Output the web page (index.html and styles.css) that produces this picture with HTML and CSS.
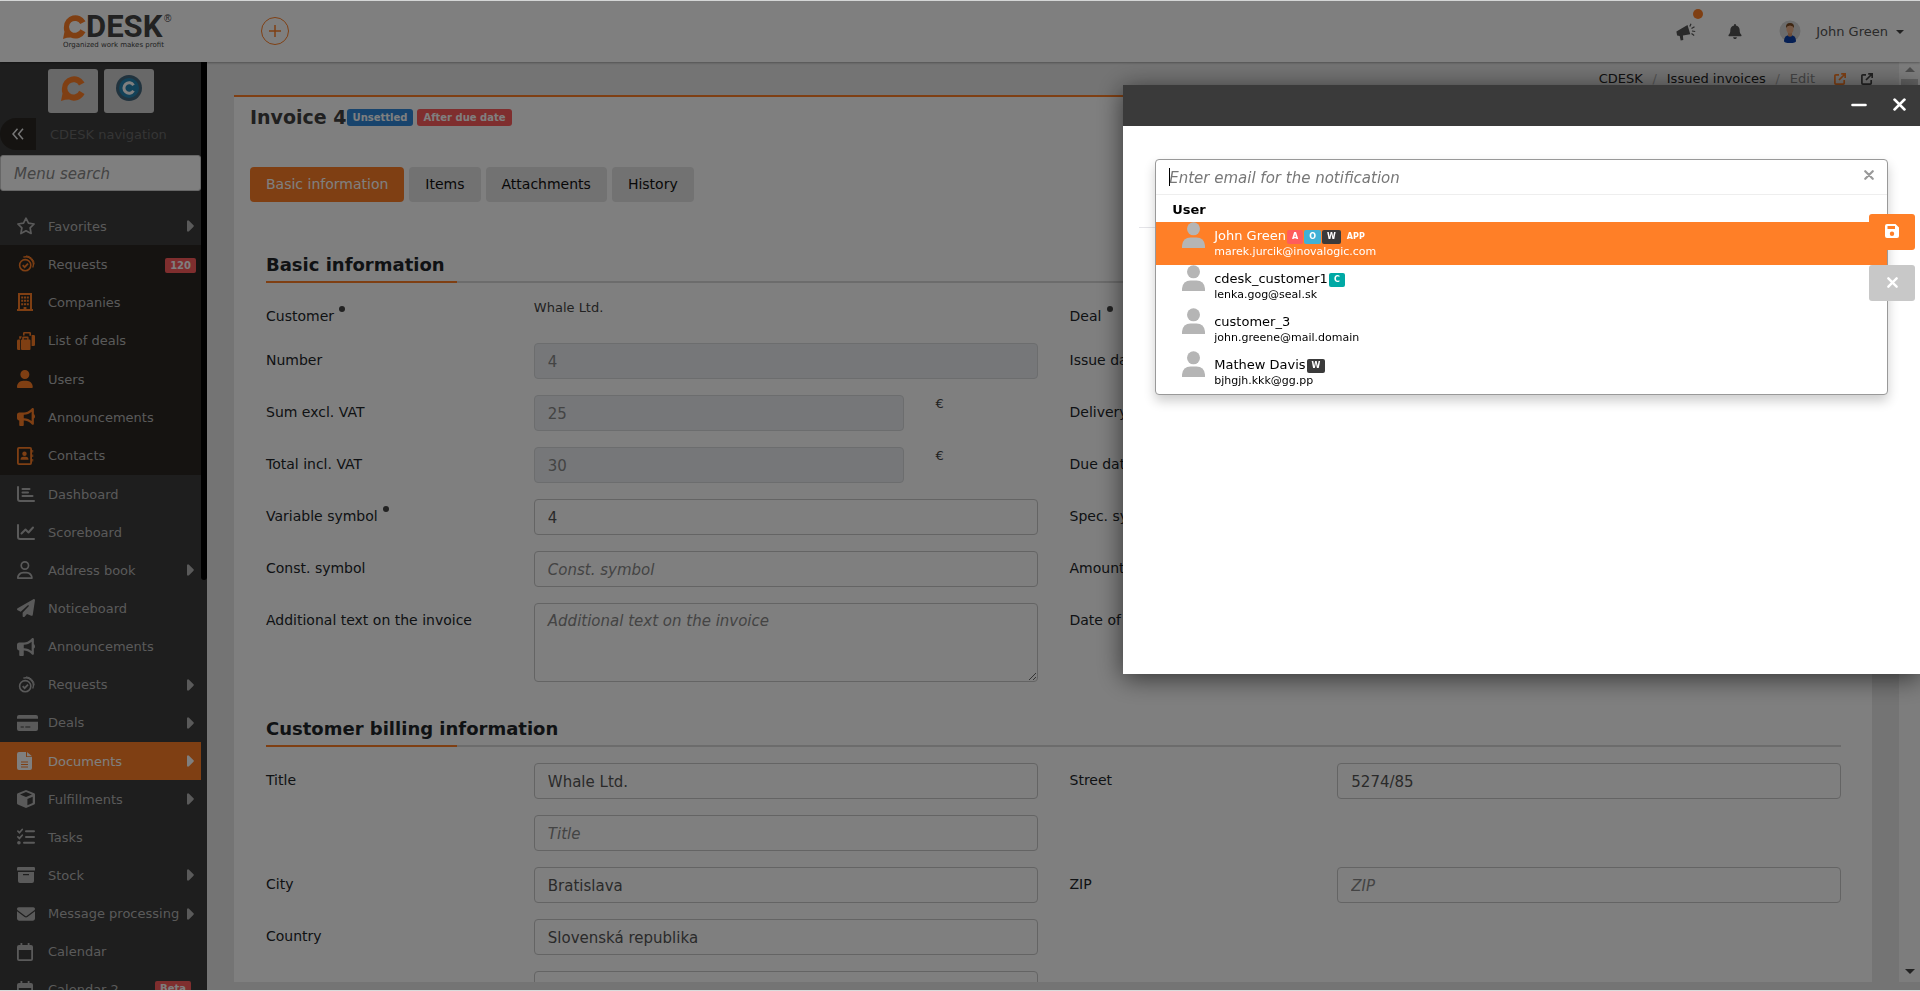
FILE: index.html
```html
<!DOCTYPE html>
<html lang="en">
<head>
<meta charset="utf-8">
<title>CDESK – Invoice 4</title>
<link rel="stylesheet" href="styles.css">
</head>
<body>
<svg class="sprite" aria-hidden="true">
  <symbol id="i-star" viewBox="0 0 18 18"><path d="M9 1.200l2.500 5 5.600.8-4 3.900 1 5.600L9 13.800l-5.100 2.700 1-5.600-4-3.900 5.600-.8z" fill="none" stroke="currentColor" stroke-width="1.700" stroke-linejoin="round"/></symbol>
  <symbol id="i-request" viewBox="0 0 18 18"><g fill="none" stroke="currentColor"><circle cx="8.200" cy="10.200" r="5.600" stroke-width="1.600"/><path d="M5.700 10.200l1.900 1.900 3.400-3.500" stroke-width="1.800"/><path d="M6.300 2.200a7.600 7.600 0 0 1 9.400 10.200" stroke-width="1.300"/><path d="M9 .9a8.300 8.300 0 0 1 8.200 8.400" stroke-width="1"/></g></symbol>
  <symbol id="i-building" viewBox="0 0 18 18"><path d="M1 0h14v16h1v2H0v-2h1zm2 2v14h3.600v-2h2.800v2H13V2z" fill-rule="evenodd" fill="currentColor"/><path d="M4.200 3.400h2v2h-2zm2.800 0h2v2H7zm2.800 0h2v2h-2zM4.200 6.800h2v2h-2zm2.800 0h2v2H7zm2.800 0h2v2h-2zM4.200 10.200h2v2h-2zm2.800 0h2v2H7zm2.800 0h2v2h-2z" fill="currentColor"/></symbol>
  <symbol id="i-bags" viewBox="0 0 18 18"><path d="M6 3.500V1.200Q6 0 7.200 0h5.600Q14 0 14 1.200v2.600h-1.600V1.600H7.600v1.900zM1.600 7.600h1.600V18H1.400Q0 18 0 16.500V9q0-1.400 1.600-1.400zM2.200 4.200h2.600L3.900 6.800H2.200zM14.600 3H16.800Q18 3 18 4.200v8.600q0 1.200-1.200 1.200h-2.200zM5.200 5.600Q5.400 4.600 6.400 4.600h4.200q1 0 1 1v2h.9q1 0 1 1V17q0 1-1 1H5q-1 0-1-1V8.600q0-1 1-1h.2zm1.600.6v1.200h3.400V6.200z" fill="currentColor" fill-rule="evenodd"/></symbol>
  <symbol id="i-user" viewBox="0 0 512 512"><path fill="currentColor" d="M224 256A128 128 0 1 0 224 0a128 128 0 1 0 0 256zm-45.700 48C79.800 304 0 383.800 0 482.300C0 498.700 13.300 512 29.700 512H418.300c16.400 0 29.700-13.300 29.700-29.700C448 383.800 368.200 304 269.700 304H178.300z"/></symbol>
  <symbol id="i-user-o" viewBox="0 0 512 512"><path fill="currentColor" d="M304 128a80 80 0 1 0 -160 0 80 80 0 1 0 160 0zM96 128a128 128 0 1 1 256 0A128 128 0 1 1 96 128zM49.300 464H398.700c-8.900-63.300-63.300-112-129-112H178.300c-65.700 0-120.100 48.700-129 112zM0 482.300C0 383.800 79.800 304 178.300 304h91.400C368.200 304 448 383.800 448 482.300c0 16.400-13.300 29.700-29.700 29.700H29.700C13.300 512 0 498.700 0 482.300z"/></symbol>
  <symbol id="i-horn" viewBox="0 0 512 512"><path fill="currentColor" d="M480 32c0-12.900-7.800-24.600-19.800-29.600s-25.700-2.200-34.900 6.900L381.700 53c-48 48-113.100 75-181 75H192 160 64c-35.300 0-64 28.700-64 64v96c0 35.300 28.700 64 64 64l0 128c0 17.700 14.300 32 32 32h64c17.700 0 32-14.300 32-32V352l8.700 0c67.900 0 133 27 181 75l43.600 43.600c9.200 9.200 22.900 11.900 34.900 6.900s19.800-16.600 19.800-29.600V300.400c18.600-8.800 32-32.500 32-60.400s-13.400-51.600-32-60.400V32zm-64 76.700V240 371.300C357.200 317.800 280.500 288 200.700 288H192V192h8.700c79.800 0 156.500-29.800 215.300-83.300z"/></symbol>
  <symbol id="i-contact" viewBox="0 0 18 18"><path d="M2 0h11q2 0 2 2v14q0 2-2 2H2q-2 0-2-2V2q0-2 2-2zm-.2 1.800v14.400h11.400V1.800z" fill="currentColor" fill-rule="evenodd"/><circle cx="7.500" cy="6.800" r="2.200" fill="currentColor"/><path d="M3.500 12.800q0-3 2.800-3h2.400q2.800 0 2.800 3z" fill="currentColor"/><path d="M15.300 3h.9v2.500h-.9zm0 4.500h.9V10h-.9zm0 4.500h.9v2.500h-.9z" fill="currentColor"/></symbol>
  <symbol id="i-bars" viewBox="0 0 18 18"><g fill="none" stroke="currentColor" stroke-width="2" stroke-linecap="round"><path d="M1 2v12q0 2 2 2h14M5.500 4h7M5.500 7.500h5.500M5.500 11h10"/></g></symbol>
  <symbol id="i-line" viewBox="0 0 18 18"><g fill="none" stroke="currentColor" stroke-width="2" stroke-linecap="round" stroke-linejoin="round"><path d="M1 2v12q0 2 2 2h14M4.500 10.500L8.500 6.500l3 3L16 4.500"/></g></symbol>
  <symbol id="i-plane" viewBox="0 0 512 512"><path fill="currentColor" d="M498.100 5.600c10.100 7 15.400 19.100 13.500 31.200l-64 416c-1.500 9.700-7.400 18.200-16 23s-18.900 5.400-28 1.600L284 427.700l-68.500 74.100c-8.900 9.700-22.900 12.900-35.200 8.100S160 493.200 160 480V396.400c0-4 1.500-7.800 4.200-10.700L331.800 202.800c5.800-6.300 5.600-16-.4-22s-15.700-6.400-22-.7L106 360.800 17.700 316.600C7.100 311.300 .3 300.700 0 288.900s5.900-22.800 16.100-28.700l448-256c10.700-6.100 23.900-5.500 34 1.400z"/></symbol>
  <symbol id="i-card" viewBox="0 0 21 18"><path d="M2 1h17q2 0 2 2v1.800H0V3q0-2 2-2zM0 7.800h21V15q0 2-2 2H2q-2 0-2-2zm3.600 4.700v1.100h3.200v-1.100zm4.700 0v1.100h5v-1.100z" fill="currentColor" fill-rule="evenodd"/></symbol>
  <symbol id="i-doc" viewBox="0 0 18 18"><path d="M2 0h7v5h6v11q0 2-2 2H2q-2 0-2-2V2q0-2 2-2zm8 0l5 4.300h-5zM4 9.400v1h7v-1zm0 2.500v1h7v-1zm0 2.500v1h7v-1z" fill="currentColor" fill-rule="evenodd"/></symbol>
  <symbol id="i-cube" viewBox="0 0 18 18"><path d="M9 0l8.200 3.200q.8.400.8 1.300v8.800q0 .9-.8 1.300L9 18 .8 14.600Q0 14.200 0 13.300V4.500q0-.9.800-1.300zm0 2L3 4.400l6 2.500 6-2.500zm1.400 6.900v6.400l5.300-2.200V6.700z" fill="currentColor" fill-rule="evenodd"/></symbol>
  <symbol id="i-tasks" viewBox="0 0 18 18"><g fill="none" stroke="currentColor" stroke-linecap="round"><path d="M9 3.300h8M9 9h8M7 14.700h10" stroke-width="2"/><path d="M.9 3.200l1.500 1.500 2.800-3.200M.9 8.900l1.500 1.500 2.800-3.200" stroke-width="1.700"/></g><circle cx="1.900" cy="14.700" r="1.800" fill="currentColor"/></symbol>
  <symbol id="i-box" viewBox="0 0 18 18"><path d="M1.200 1h15.600Q18 1 18 2.200v2.300H0V2.200Q0 1 1.200 1zM1 6h16v9q0 2-2 2H3q-2 0-2-2zm5 2v1.200h6V8z" fill="currentColor" fill-rule="evenodd"/></symbol>
  <symbol id="i-mail" viewBox="0 0 512 512"><path fill="currentColor" d="M48 64C21.500 64 0 85.500 0 112c0 15.100 7.100 29.300 19.200 38.400L236.800 313.600c11.400 8.500 27 8.500 38.400 0L492.800 150.400c12.100-9.100 19.200-23.300 19.200-38.400c0-26.500-21.500-48-48-48H48zM0 176V384c0 35.300 28.700 64 64 64H448c35.300 0 64-28.700 64-64V176L294.400 339.200c-22.800 17.100-54 17.100-76.800 0L0 176z"/></symbol>
  <symbol id="i-cal" viewBox="0 0 18 18"><path d="M3.500 0h1.800v2h5.400V0h1.800v2H14q2 0 2 2v12q0 2-2 2H2q-2 0-2-2V4q0-2 2-2h1.500zM1.800 7v9.200h12.400V7z" fill="currentColor" fill-rule="evenodd"/></symbol>
  <symbol id="i-arrow" viewBox="0 0 7 12"><path d="M0 1.200Q.6-.3 2 .7L6.500 5.300q.7.700 0 1.400L2 11.300Q.6 12.300 0 10.800z" fill="currentColor"/></symbol>
  <symbol id="i-x" viewBox="0 0 12 12"><path d="M1.500 1.500l9 9m0-9l-9 9" fill="none" stroke="currentColor" stroke-width="2.600" stroke-linecap="round"/></symbol>
  <symbol id="i-ext" viewBox="0 0 12 12"><path d="M5 1.800H1.800Q.9 1.800.9 2.700v7.500q0 .9.900.9h7.500q.9 0 .9-.9V7M7.200.9h4v4M11 1L5 7" fill="none" stroke="currentColor" stroke-width="1.700"/></symbol>
  <symbol id="i-person" viewBox="0 0 23 26"><circle cx="11.500" cy="6.800" r="6.500" fill="currentColor"/><path d="M0 26v-2.500Q1 15.600 8.500 15.600h6Q22 15.600 23 23.500V26z" fill="currentColor"/></symbol>
  <symbol id="i-c" viewBox="0 0 24 26"><path d="M0 26L1.500 18.500A12 12 0 0 1 1 13A12 12 0 0 1 23.500 7.500L18 10.500A6.200 6.200 0 1 0 18.200 15.800L23.500 19A12 12 0 0 1 8 24.600Q4 24.600 0 26z" fill="#ff7f27"/></symbol>
</svg>

<div class="app">
  <header class="topbar">
    <a class="logo" href="#" aria-label="CDESK">
      <svg width="112" height="42" viewBox="0 0 112 42">
        <use href="#i-c" x="0" y="4" width="23" height="25"/>
        <text class="logo-name" x="23" y="27">DESK</text>
        <text class="logo-reg" x="101" y="12">®</text>
        <text class="logo-tag" x="0" y="37">Organized work makes profit</text>
      </svg>
    </a>
    <button class="add" type="button" aria-label="Add"><svg width="12" height="12" viewBox="0 0 12 12"><path d="M6 0v12M0 6h12" stroke="currentColor" stroke-width="1.500"/></svg></button>
    <div class="userbar">
      <button class="plain news" type="button" aria-label="News">
        <svg width="20" height="18" viewBox="0 0 20 18"><path d="M.4 8.400L11.500 2l2.800 9.300-7.400 1.300.4 4.400-2.600.5-1-4.600-2.600-.3z" fill="currentColor"/><path d="M13.800 3.500L15 .7M15.500 5.500l3-1.800M16 8l3.200.5M15.500 10.500l2.700 2" stroke="currentColor" stroke-width="1.200"/></svg>
        <span class="dot"></span>
      </button>
      <button class="plain" type="button" aria-label="Notifications"><svg width="14" height="15" viewBox="0 0 448 512"><path fill="currentColor" d="M224 0c-17.700 0-32 14.300-32 32V51.200C119 66 64 130.600 64 208v18.800c0 47-17.300 92.400-48.500 127.600l-7.400 8.300c-8.400 9.400-10.400 22.900-5.300 34.400S19.400 416 32 416H416c12.600 0 24-7.400 29.200-18.900s3.100-25-5.300-34.400l-7.400-8.300C401.300 319.200 384 273.900 384 226.800V208c0-77.400-55-142-128-156.800V32c0-17.700-14.300-32-32-32zm45.300 493.300c12-12 18.700-28.300 18.700-45.300H160c0 17 6.700 33.300 18.700 45.300s28.300 18.700 45.300 18.700s33.300-6.700 45.300-18.700z"/></svg></button>
      <button class="plain account" type="button">
        <svg width="22" height="24" viewBox="0 0 22 24"><circle cx="11" cy="11" r="10.500" fill="#d8d8d8"/><path d="M5 21q0-6 6-6t6 6q0 2-6 2t-6-2z" fill="#0b3fa8"/><path d="M9 11h4v5q-2 1.500-4 0z" fill="#d99a72"/><ellipse cx="11" cy="9" rx="3.600" ry="4.600" fill="#eab08a"/><path d="M7 8q-.5-5 4-5t4 5q-1-2.500-4-2.500T7 8z" fill="#7a4a22"/></svg>
        <span>John Green</span><span class="caret"></span>
      </button>
    </div>
  </header>

  <div class="body">
    <aside class="side">
      <div class="side-inner">
        <div class="apps">
          <button type="button" aria-label="CDESK"><svg width="24" height="26"><use href="#i-c" width="24" height="26"/></svg></button>
          <button type="button" aria-label="Customer portal"><svg width="26" height="26" viewBox="0 0 26 26"><circle cx="13" cy="13" r="13" fill="#42667c"/><circle cx="13" cy="13" r="10" fill="#2585b2"/><path d="M17.500 10.200A5.200 5.200 0 1 0 17.500 15.800" fill="none" stroke="#fff" stroke-width="3"/></svg></button>
        </div>
        <div class="navhead">
          <button class="collapse" type="button" aria-label="Collapse menu"><svg width="12" height="12" viewBox="0 0 12 12"><path d="M5.500.8L1 6l4.500 5.200M11 .8L6.500 6l4.500 5.200" fill="none" stroke="currentColor" stroke-width="1.500"/></svg></button>
          <span>CDESK navigation</span>
        </div>
        <input class="menusearch" type="text" placeholder="Menu search" aria-label="Menu search">
        <nav class="nav">
          <a class="item" href="#"><svg class="ic"><use href="#i-star"/></svg>Favorites<svg class="arr"><use href="#i-arrow"/></svg></a>
          <div class="favs">
            <a class="item" href="#"><svg class="ic"><use href="#i-request"/></svg>Requests<span class="count">120</span></a>
            <a class="item" href="#"><svg class="ic"><use href="#i-building"/></svg>Companies</a>
            <a class="item" href="#"><svg class="ic"><use href="#i-bags"/></svg>List of deals</a>
            <a class="item" href="#"><svg class="ic"><use href="#i-user"/></svg>Users</a>
            <a class="item" href="#"><svg class="ic"><use href="#i-horn"/></svg>Announcements</a>
            <a class="item" href="#"><svg class="ic"><use href="#i-contact"/></svg>Contacts</a>
          </div>
          <div class="mods">
            <a class="item" href="#"><svg class="ic"><use href="#i-bars"/></svg>Dashboard</a>
            <a class="item" href="#"><svg class="ic"><use href="#i-line"/></svg>Scoreboard</a>
            <a class="item" href="#"><svg class="ic"><use href="#i-user-o"/></svg>Address book<svg class="arr"><use href="#i-arrow"/></svg></a>
            <a class="item" href="#"><svg class="ic"><use href="#i-plane"/></svg>Noticeboard</a>
            <a class="item" href="#"><svg class="ic"><use href="#i-horn"/></svg>Announcements</a>
            <a class="item" href="#"><svg class="ic"><use href="#i-request"/></svg>Requests<svg class="arr"><use href="#i-arrow"/></svg></a>
            <a class="item" href="#"><svg class="ic wide"><use href="#i-card"/></svg>Deals<svg class="arr"><use href="#i-arrow"/></svg></a>
            <a class="item active" href="#"><svg class="ic"><use href="#i-doc"/></svg>Documents<svg class="arr"><use href="#i-arrow"/></svg></a>
            <a class="item" href="#"><svg class="ic"><use href="#i-cube"/></svg>Fulfillments<svg class="arr"><use href="#i-arrow"/></svg></a>
            <a class="item" href="#"><svg class="ic"><use href="#i-tasks"/></svg>Tasks</a>
            <a class="item" href="#"><svg class="ic"><use href="#i-box"/></svg>Stock<svg class="arr"><use href="#i-arrow"/></svg></a>
            <a class="item" href="#"><svg class="ic"><use href="#i-mail"/></svg>Message processing<svg class="arr"><use href="#i-arrow"/></svg></a>
            <a class="item" href="#"><svg class="ic"><use href="#i-cal"/></svg>Calendar</a>
            <a class="item" href="#"><svg class="ic"><use href="#i-cal"/></svg>Calendar 2<span class="count beta">Beta</span></a>
          </div>
        </nav>
      </div>
      <div class="side-scroll"></div>
    </aside>

    <main class="main">
      <div class="page">
        <nav class="crumbs" aria-label="Breadcrumb">
          <a href="#">CDESK</a><i>/</i><a href="#">Issued invoices</a><i>/</i><span>Edit</span>
          <a class="ext hot" href="#" aria-label="Open"><svg width="12" height="12"><use href="#i-ext"/></svg></a>
          <a class="ext" href="#" aria-label="Open in new window"><svg width="12" height="12"><use href="#i-ext"/></svg></a>
        </nav>
        <div class="card">
          <h1>Invoice 4<span class="tag blue">Unsettled</span><span class="tag red">After due date</span></h1>
          <div class="tabs">
            <button class="tab on" type="button">Basic information</button>
            <button class="tab" type="button">Items</button>
            <button class="tab" type="button">Attachments</button>
            <button class="tab" type="button">History</button>
          </div>

          <h2>Basic information</h2>
          <div class="cols">
            <div class="field short"><span class="lab">Customer <b class="req"></b></span><div class="ctl"><span class="val">Whale Ltd.</span></div></div>
            <div class="field short"><span class="lab">Deal <b class="req"></b></span><div class="ctl"></div></div>
            <div class="field"><label class="lab" for="number">Number</label><div class="ctl"><input id="number" type="text" value="4" disabled></div></div>
            <div class="field"><label class="lab" for="issue">Issue date</label><div class="ctl"><input id="issue" type="text"></div></div>
            <div class="field"><label class="lab" for="sum">Sum excl. VAT</label><div class="ctl money"><div><input id="sum" type="text" value="25" disabled></div><span class="val">€</span></div></div>
            <div class="field"><label class="lab" for="delivery">Delivery date</label><div class="ctl"><input id="delivery" type="text"></div></div>
            <div class="field"><label class="lab" for="total">Total incl. VAT</label><div class="ctl money"><div><input id="total" type="text" value="30" disabled></div><span class="val">€</span></div></div>
            <div class="field"><label class="lab" for="due">Due date</label><div class="ctl"><input id="due" type="text"></div></div>
            <div class="field"><label class="lab" for="var">Variable symbol <b class="req"></b></label><div class="ctl"><input id="var" type="text" value="4"></div></div>
            <div class="field"><label class="lab" for="spec">Spec. symbol</label><div class="ctl"><input id="spec" type="text"></div></div>
            <div class="field"><label class="lab" for="const">Const. symbol</label><div class="ctl"><input id="const" type="text" placeholder="Const. symbol"></div></div>
            <div class="field"><label class="lab" for="amount">Amount</label><div class="ctl"><input id="amount" type="text"></div></div>
            <div class="field"><label class="lab" for="add">Additional text on the invoice</label><div class="ctl"><textarea id="add" placeholder="Additional text on the invoice"></textarea></div></div>
            <div class="field"><label class="lab" for="paid">Date of payment</label><div class="ctl"><input id="paid" type="text"></div></div>
          </div>

          <h2 class="next">Customer billing information</h2>
          <div class="cols">
            <div class="field"><label class="lab" for="title">Title</label><div class="ctl"><input id="title" type="text" value="Whale Ltd."></div></div>
            <div class="field"><label class="lab" for="street">Street</label><div class="ctl"><input id="street" type="text" value="5274/85"></div></div>
            <div class="field"><span class="lab"></span><div class="ctl"><input type="text" placeholder="Title" aria-label="Title, second line"></div></div>
            <div class="field"></div>
            <div class="field"><label class="lab" for="city">City</label><div class="ctl"><input id="city" type="text" value="Bratislava"></div></div>
            <div class="field"><label class="lab" for="zip">ZIP</label><div class="ctl"><input id="zip" type="text" placeholder="ZIP"></div></div>
            <div class="field"><label class="lab" for="country">Country</label><div class="ctl"><input id="country" type="text" value="Slovenská republika"></div></div>
            <div class="field"></div>
            <div class="field"><span class="lab"></span><div class="ctl"><input type="text" aria-label="Company ID"></div></div>
          </div>
        </div>
      </div>
      <div class="pagescroll"><span class="up"></span><span class="thumb"></span><span class="down"></span></div>
    </main>
  </div>
</div>

<div class="backdrop"></div>

<section class="modal" role="dialog" aria-label="Notification">
  <div class="modal-head">
    <button class="plain" type="button" aria-label="Minimize"><svg width="16" height="4" viewBox="0 0 16 4"><path d="M1.500 2h13" stroke="currentColor" stroke-width="2.600" stroke-linecap="round"/></svg></button>
    <button class="plain" type="button" aria-label="Close"><svg width="13" height="13"><use href="#i-x"/></svg></button>
  </div>
  <div class="modal-body">
    <hr>
    <div class="picker">
      <div class="picker-search">
        <input type="text" placeholder="Enter email for the notification" aria-label="Email for the notification">
        <span class="cursor"></span>
        <button class="plain" type="button" aria-label="Clear"><svg width="10" height="10"><use href="#i-x"/></svg></button>
      </div>
      <div class="group">User</div>
      <ul class="people">
        <li class="hot"><svg class="person"><use href="#i-person"/></svg><div><div class="name">John Green<span class="chip a">A</span><span class="chip o">O</span><span class="chip w">W</span><span class="chip app-chip">APP</span></div><div class="mail">marek.jurcik@inovalogic.com</div></div></li>
        <li><svg class="person"><use href="#i-person"/></svg><div><div class="name">cdesk_customer1<span class="chip c">C</span></div><div class="mail">lenka.gog@seal.sk</div></div></li>
        <li><svg class="person"><use href="#i-person"/></svg><div><div class="name">customer_3</div><div class="mail">john.greene@mail.domain</div></div></li>
        <li><svg class="person"><use href="#i-person"/></svg><div><div class="name">Mathew Davis<span class="chip w">W</span></div><div class="mail">bjhgjh.kkk@gg.pp</div></div></li>
      </ul>
    </div>
    <div class="actions">
      <button class="save" type="button" aria-label="Save"><svg width="14" height="14" viewBox="0 0 14 14"><path d="M2 0h8.500L14 3.500V12q0 2-2 2H2q-2 0-2-2V2q0-2 2-2zm.5 2v3h7.500V2zM7 7.500a2.200 2.200 0 1 0 0 4.400 2.200 2.200 0 1 0 0-4.400z" fill="#fff" fill-rule="evenodd"/></svg></button>
      <button class="cancel" type="button" aria-label="Cancel"><svg width="11" height="11"><use href="#i-x"/></svg></button>
    </div>
  </div>
</section>
</body>
</html>
```
FILE: styles.css
```css
* { box-sizing: border-box; }
body {
  margin: 0;
  height: 100vh;
  overflow: hidden;
  background: #d9dbdb;
  font-family: Verdana, "DejaVu Sans", sans-serif;
  font-size: 13px;
  color: #333;
}
button, input, textarea { font-family: inherit; }
button { cursor: pointer; }
a { color: inherit; text-decoration: none; }
svg { display: block; }
.sprite { position: absolute; width: 0; height: 0; }
.plain { border: 0; padding: 0; background: none; color: inherit; }

.app { display: flex; flex-direction: column; height: 100vh; padding: 1px 0; isolation: isolate; }
.backdrop { position: fixed; inset: 1px 0; background: rgba(0, 0, 0, .5); }

/* Top bar */
.topbar {
  display: flex;
  align-items: center;
  flex: none;
  height: 61px;
  padding: 0 16px 2px 63px;
  background: #fff;
  box-shadow: 0 1px 2px rgba(0, 0, 0, .3);
  z-index: 1;
}
.logo-name { font: 700 31px Roboto, sans-serif; fill: #444; }
.logo-reg { font: 10px "Liberation Sans", sans-serif; fill: #444; }
.logo-tag { font: 7px "DejaVu Sans", sans-serif; fill: #444; }
.add {
  display: grid;
  place-items: center;
  width: 28px;
  height: 28px;
  margin-left: 86px;
  border: 1px solid #ff7f27;
  border-radius: 50%;
  background: none;
  color: #ff7f27;
}
.userbar { display: flex; align-items: center; margin-left: auto; padding-top: 2px; color: #555; }
.news { position: relative; margin-right: 32px; }
.dot { position: absolute; right: -7px; top: -14px; width: 10px; height: 10px; border-radius: 50%; background: #ff7f27; }
.account { display: flex; align-items: center; margin-left: 37px; font-size: 13px; color: #555; }
.account svg { margin-right: 15px; }
.caret { margin-left: 8px; border: 4px solid transparent; border-top-color: #444; border-bottom: 0; }

/* Side menu */
.body { display: flex; flex: 1; min-height: 0; }
.side { position: relative; flex: none; width: 207px; background: #3c3c3c; color: #b4b4b4; overflow: hidden; }
.side-inner { width: 201px; }
.side-scroll { position: absolute; top: 0; right: 0; width: 6px; height: 518px; background: #000; border-radius: 0 0 3px 3px; }
.apps { display: flex; justify-content: center; gap: 6px; padding: 7px 0 5px; }
.apps button { display: flex; justify-content: center; width: 50px; height: 44px; padding: 6px 0; border: 0; border-radius: 3px; background: #d0d0d0; }
.navhead { display: flex; align-items: center; gap: 14px; color: #6a6a6a; }
.collapse { display: grid; place-items: center; width: 36px; height: 32px; padding: 0; border: 0; border-radius: 16px 0 0 16px; background: #2a2723; color: #eee; }
.menusearch { display: block; width: 100%; height: 36px; margin: 5px 0 16px; padding: 2px 13px 0; border: 1px solid #ccc; border-radius: 3px; background: #fff; font-size: 15px; }
.item { display: flex; align-items: center; height: 38px; padding: 0 7px 0 17px; }
.favs, .mods { display: flex; flex-direction: column; }
.favs { height: 230px; background: #2a2723; }
.mods { height: 534px; }
.favs .item, .mods .item { flex: 1; height: auto; min-height: 0; }
.ic { width: 18px; height: 18px; margin-right: 13px; }
.ic.wide { width: 21px; margin-right: 10px; }
.favs .ic { color: #ff7f27; }
.arr { width: 7px; height: 12px; margin-left: auto; }
.item.active { background: #ff7f27; color: #fff; }
.count { margin: 2px -2px 0 auto; padding: 0 5px; border-radius: 2px; background: #ff5c5c; color: #fff; font-size: 10px; line-height: 15px; font-weight: bold; }
.count.beta { margin: 10px 3px 0 auto; align-self: flex-start; }

/* Page */
.main { display: flex; flex: 1; min-width: 0; padding-bottom: 8px; background: #e8e8e8; }
.page { flex: 1; min-width: 0; padding: 8px 27px 0; display: flex; flex-direction: column; }
.crumbs { display: flex; justify-content: flex-end; height: 25px; line-height: 18px; margin-right: -1px; color: #222; }
.crumbs i { width: 24px; text-align: center; font-style: normal; color: #aaa; }
.crumbs span { color: #888; margin-right: 4px; }
.ext { margin-left: 15px; padding-top: 3px; color: #444; }
.ext.hot { color: #ff7f27; }
.card { flex: 1; min-height: 0; overflow: hidden; padding: 7px 31px 0 32px; border-top: 2px solid #ff7f27; background: #fff; }
h1 { display: flex; align-items: center; margin: 0 -16px; height: 25px; font-size: 19px; color: #404040; }
.tag { height: 17px; margin: 1px 4px 0 0; padding: 0 6px; border-radius: 3px; color: #fff; font-size: 10px; line-height: 17px; }
.tag.blue { background: #3089db; }
.tag.red { background: #ff5c5c; }
.tabs { display: flex; gap: 5px; margin: 38px -16px 52px; }
.tab { height: 35px; padding: 0 16px 2px; border: 0; border-radius: 4px; background: #e4e4e4; font-size: 14px; color: #111; }
.tab.on { background: #ff7f27; color: #fff; }
h2 { position: relative; margin: 0; padding-bottom: 5px; border-bottom: 2px solid #d8d8d8; font-size: 18px; line-height: 22px; color: #212529; }
h2::after { content: ""; position: absolute; left: 0; bottom: -2px; width: 191px; height: 2px; background: #ff7f27; }
h2.next { margin-top: 20px; }
.cols { display: grid; grid-template-columns: 1fr 1fr; margin: 16px -16px 0; }
.field { display: grid; grid-template-columns: 1fr 2fr; align-items: start; padding-bottom: 16px; }
.lab { padding: 7px 16px 0; font-size: 14px; line-height: 21px; color: #212529; }
.ctl { padding: 0 16px; }
.val { line-height: 18px; color: #444; }
.req { display: inline-block; width: 6px; height: 6px; margin-left: 1px; border-radius: 50%; background: #444; vertical-align: 9px; }
.money { display: grid; grid-template-columns: 3fr 1fr; padding: 0; }
.money > * { padding: 0 16px; }
.ctl input, textarea { display: block; width: 100%; height: 36px; padding: 1px 13px 0; border: 1px solid #c8c8c8; border-radius: 4px; background: #fff; font-size: 15px; color: #555; }
.ctl input:disabled { background: #eceff2; border-color: #d8dadd; color: #888; }
textarea { height: 79px; padding: 8px 13px; }
::placeholder { color: #888; font-style: italic; opacity: 1; }
.pagescroll { display: flex; flex-direction: column; align-items: center; width: 21px; padding: 5px 0 8px; background: #fafafa; }
.up, .down { border: 5px solid transparent; }
.up { border-bottom-color: #999; border-top: 0; }
.down { margin-top: auto; border-top-color: #444; border-bottom: 0; }
.thumb { width: 17px; height: 90px; margin-top: 7px; background: #c4c4c4; }

/* Dialog */
.modal { position: fixed; top: 85px; right: 0; width: 41.5%; background: #fff; box-shadow: 0 4px 24px rgba(0, 0, 0, .6); }
.modal-head { display: flex; align-items: center; justify-content: flex-end; gap: 26px; height: 41px; padding: 0 14px 2px 0; background: #3a3a3a; color: #fff; }
.modal-body { position: relative; min-height: 548px; padding: 101px 16px 0; }
hr { margin: 0; border: 0; border-top: 1px solid #e4e4e8; }
.picker { position: absolute; top: 33px; left: 32px; right: 32px; border: 1px solid #999; border-radius: 4px; background: #fff; box-shadow: 0 6px 12px rgba(0, 0, 0, .2); color: #000; }
.picker-search { position: relative; display: flex; height: 35px; padding-right: 13px; border-bottom: 1px solid #eee; color: #999; }
.picker-search input { flex: 1; padding: 2px 13px 0; border: 0; outline: 0; background: none; font-size: 15px; }
.picker-search input::placeholder { color: #777; }
.picker-search button { align-self: center; margin-bottom: 4px; }
.cursor { position: absolute; left: 13px; top: 8px; width: 1px; height: 18px; background: #000; }
.group { height: 27px; padding-left: 16px; font-weight: bold; line-height: 30px; }
.people { margin: 0; padding: 0; list-style: none; }
.people li { display: flex; gap: 9px; height: 43px; padding-left: 26px; }
.people .hot { background: #ff7f27; color: #fff; }
.person { width: 23px; height: 26px; color: #b5b5b5; }
.name { display: flex; align-items: center; gap: 1px; height: 16px; margin-top: 5px; }
.mail { font-size: 11px; line-height: 18px; }
.chip { height: 14px; margin-top: 4px; padding: 0 5px; border-radius: 2px; color: #fff; font-size: 8px; line-height: 14px; font-weight: bold; }
.chip.a { background: #ff5c5c; }
.chip.o { background: #41b1d6; }
.chip.w { background: #3a3a3a; }
.chip.c { background: #00a9a5; }
.actions { position: absolute; top: 88px; right: 5px; display: grid; gap: 15px; }
.actions button { display: grid; place-items: center; width: 46px; height: 36px; padding: 0 0 2px; border: 0; border-radius: 3px; color: #fff; }
.save { background: #ff7f27; }
.cancel { background: #c8c8c8; }
```
